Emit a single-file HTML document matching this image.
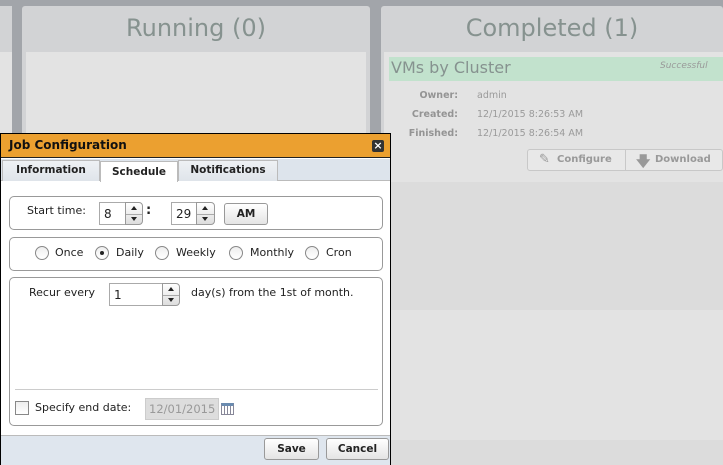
<!DOCTYPE html>
<html><head><style>
*{box-sizing:border-box;margin:0;padding:0}
body{width:723px;height:465px;overflow:hidden;background:#a2a5aa;font-family:"DejaVu Sans","Liberation Sans",sans-serif;position:relative;font-size:11px;color:#222}
.a{position:absolute}
.hdr{color:#86928f;font-size:24px;text-align:center;font-family:"DejaVu Sans",sans-serif}
.lbl{color:#949494;font-size:9.5px;font-weight:bold;text-align:right;width:70px}
.val{color:#9a9a9a;font-size:9.5px}
.box{border:1px solid #999;border-radius:5px;background:#fff}
.inp{border:1px solid #aaa;background:#fff;padding:4px 0 0 4px;font-size:12px}
.spin{border:1px solid #999;border-radius:0 4px 4px 0;background:linear-gradient(#fff,#ddd)}
.spin:before{content:"";position:absolute;left:5px;top:3px;border:3.5px solid transparent;border-bottom:4px solid #222;border-top:0}
.spin:after{content:"";position:absolute;left:5px;bottom:3px;border:3.5px solid transparent;border-top:4px solid #222;border-bottom:0}
.spin i{position:absolute;left:0;right:0;top:50%;border-top:1px solid #aaa}
.btn{border:1px solid #999;border-radius:3px;background:linear-gradient(#fff,#e4e4e4);font-weight:bold;font-size:10.5px;text-align:center}
.rad{width:14px;height:14px;border:1px solid #888;border-radius:50%;background:linear-gradient(#eee,#fff)}
.rt{font-size:11px}
</style></head><body>
<div class="a" style="left:0;top:6px;width:12px;height:459px;background:#d2d3d5"></div>
<div class="a" style="left:0;top:52px;width:12px;height:413px;background:#e3e3e3"></div>
<div class="a" style="left:22px;top:6px;width:348px;height:459px;background:#d2d3d5;border-radius:3px"></div>
<div class="a hdr" style="left:22px;top:14px;width:348px">Running (0)</div>
<div class="a" style="left:26px;top:52px;width:340px;height:413px;background:#e3e3e3"></div>
<div class="a" style="left:381px;top:6px;width:342px;height:459px;background:#d2d3d5;border-radius:3px"></div>
<div class="a hdr" style="left:381px;top:14px;width:342px">Completed (1)</div>
<div class="a" style="left:384px;top:52px;width:339px;height:130px;background:#e3e3e3"></div>
<div class="a" style="left:384px;top:182px;width:339px;height:128px;background:#dcdcdc"></div>
<div class="a" style="left:384px;top:310px;width:339px;height:130px;background:#e3e3e3"></div>
<div class="a" style="left:384px;top:440px;width:339px;height:25px;background:#dcdcdc"></div>
<div class="a" style="left:389px;top:57px;width:334px;height:24px;background:#c2e2cd"></div>
<div class="a" style="left:391px;top:58px;color:#86928f;font-size:16px">VMs by Cluster</div>
<div class="a" style="left:660px;top:61px;color:#999;font-size:9px;font-style:italic">Successful</div>
<div class="a lbl" style="left:388px;top:90px">Owner:</div><div class="a val" style="left:477px;top:90px">admin</div>
<div class="a lbl" style="left:388px;top:109px">Created:</div><div class="a val" style="left:477px;top:109px">12/1/2015 8:26:53 AM</div>
<div class="a lbl" style="left:388px;top:128px">Finished:</div><div class="a val" style="left:477px;top:128px">12/1/2015 8:26:54 AM</div>
<div class="a" style="left:527px;top:149px;width:196px;height:22px;border:1px solid #c8c8c8;border-radius:3px;background:#e8e8e8;color:#999;font-weight:bold;font-size:10px">
 <span class="a" style="left:11px;top:2px;font-size:13px;color:#999">✎</span><span class="a" style="left:29px;top:4px">Configure</span>
 <div class="a" style="left:97px;top:0;height:20px;border-left:1px solid #c8c8c8"></div>
 <span class="a" style="left:108px;top:1px;font-size:14px;color:#999">🡇</span><span class="a" style="left:127px;top:4px">Download</span>
</div>
<div class="a" style="left:0;top:133px;width:391px;height:332px;border:1px solid #000;background:#fff">
 <div class="a" style="left:0;top:0;width:389px;height:24px;background:#eba030;border-bottom:1px solid #222"></div>
 <div class="a" style="left:8px;top:4px;font-weight:bold;font-size:12px;color:#111">Job Configuration</div>
 <div class="a" style="left:371px;top:6px;width:12px;height:12px;background:#333;border-radius:2px;color:#fff;font-size:11px;line-height:11px;text-align:center;font-weight:bold">×</div>
 <div class="a" style="left:0;top:25px;width:389px;height:22px;background:#dde4ec;border-bottom:1px solid #bbb"></div>
 <div class="a" style="left:1px;top:26px;width:98px;height:21px;background:linear-gradient(#eef1f4,#dfe4ea);border:1px solid #bbb;border-bottom:0;font-weight:bold;font-size:10.5px;text-align:center;padding-top:3px">Information</div>
 <div class="a" style="left:99px;top:27px;width:78px;height:21px;background:#fff;border:1px solid #bbb;border-bottom:0;font-weight:bold;font-size:10.5px;text-align:center;padding-top:4px">Schedule</div>
 <div class="a" style="left:177px;top:26px;width:100px;height:21px;background:linear-gradient(#eef1f4,#dfe4ea);border:1px solid #bbb;border-bottom:0;font-weight:bold;font-size:10.5px;text-align:center;padding-top:3px">Notifications</div>

 <div class="a box" style="left:8px;top:62px;width:374px;height:34px"></div>
 <div class="a rt" style="left:26px;top:70px">Start time:</div>
 <div class="a inp" style="left:98px;top:68px;width:27px;height:23px">8</div>
 <div class="a spin" style="left:124px;top:68px;width:18px;height:23px"><i></i></div>
 <div class="a" style="left:145px;top:69px;font-weight:bold;font-size:13px">:</div>
 <div class="a inp" style="left:170px;top:68px;width:26px;height:23px">29</div>
 <div class="a spin" style="left:195px;top:68px;width:19px;height:23px"><i></i></div>
 <div class="a btn" style="left:223px;top:69px;width:44px;height:22px;padding-top:4px">AM</div>

 <div class="a box" style="left:8px;top:103px;width:374px;height:34px"></div>
 <div class="a rad" style="left:34px;top:112px"></div><div class="a rt" style="left:54px;top:112px">Once</div>
 <div class="a rad" style="left:94px;top:112px"></div><div class="a" style="left:99px;top:117px;width:4px;height:4px;border-radius:50%;background:#222"></div><div class="a rt" style="left:115px;top:112px">Daily</div>
 <div class="a rad" style="left:154px;top:112px"></div><div class="a rt" style="left:175px;top:112px">Weekly</div>
 <div class="a rad" style="left:228px;top:112px"></div><div class="a rt" style="left:249px;top:112px">Monthly</div>
 <div class="a rad" style="left:304px;top:112px"></div><div class="a rt" style="left:325px;top:112px">Cron</div>

 <div class="a box" style="left:8px;top:143px;width:374px;height:149px"></div>
 <div class="a rt" style="left:28px;top:152px">Recur every</div>
 <div class="a inp" style="left:108px;top:149px;width:54px;height:23px">1</div>
 <div class="a spin" style="left:161px;top:149px;width:18px;height:23px"><i></i></div>
 <div class="a rt" style="left:190px;top:152px">day(s) from the 1st of month.</div>
 <div class="a" style="left:14px;top:255px;width:363px;border-top:1px solid #ccc"></div>
 <div class="a" style="left:14px;top:267px;width:14px;height:14px;border:1px solid #888;background:linear-gradient(#eee,#fff)"></div>
 <div class="a rt" style="left:34px;top:267px">Specify end date:</div>
 <div class="a" style="left:144px;top:264px;width:74px;height:22px;background:#ddd;border:1px solid #ccc;color:#999;font-size:11.5px;padding:3px 0 0 3px">12/01/2015</div>
 <div class="a" style="left:220px;top:269px;width:13px;height:12px;border:1px solid #889;background:repeating-linear-gradient(90deg,#fff 0 2px,#889 2px 3px),#fff;border-top:3px solid #6a8bb0"></div>
 <div class="a" style="left:0;top:301px;width:389px;height:30px;background:#dfe6ee;border-top:1px solid #bbb"></div>
 <div class="a btn" style="left:263px;top:304px;width:55px;height:22px;padding-top:4px">Save</div>
 <div class="a btn" style="left:325px;top:304px;width:63px;height:22px;padding-top:4px">Cancel</div>
</div>
</body></html>
